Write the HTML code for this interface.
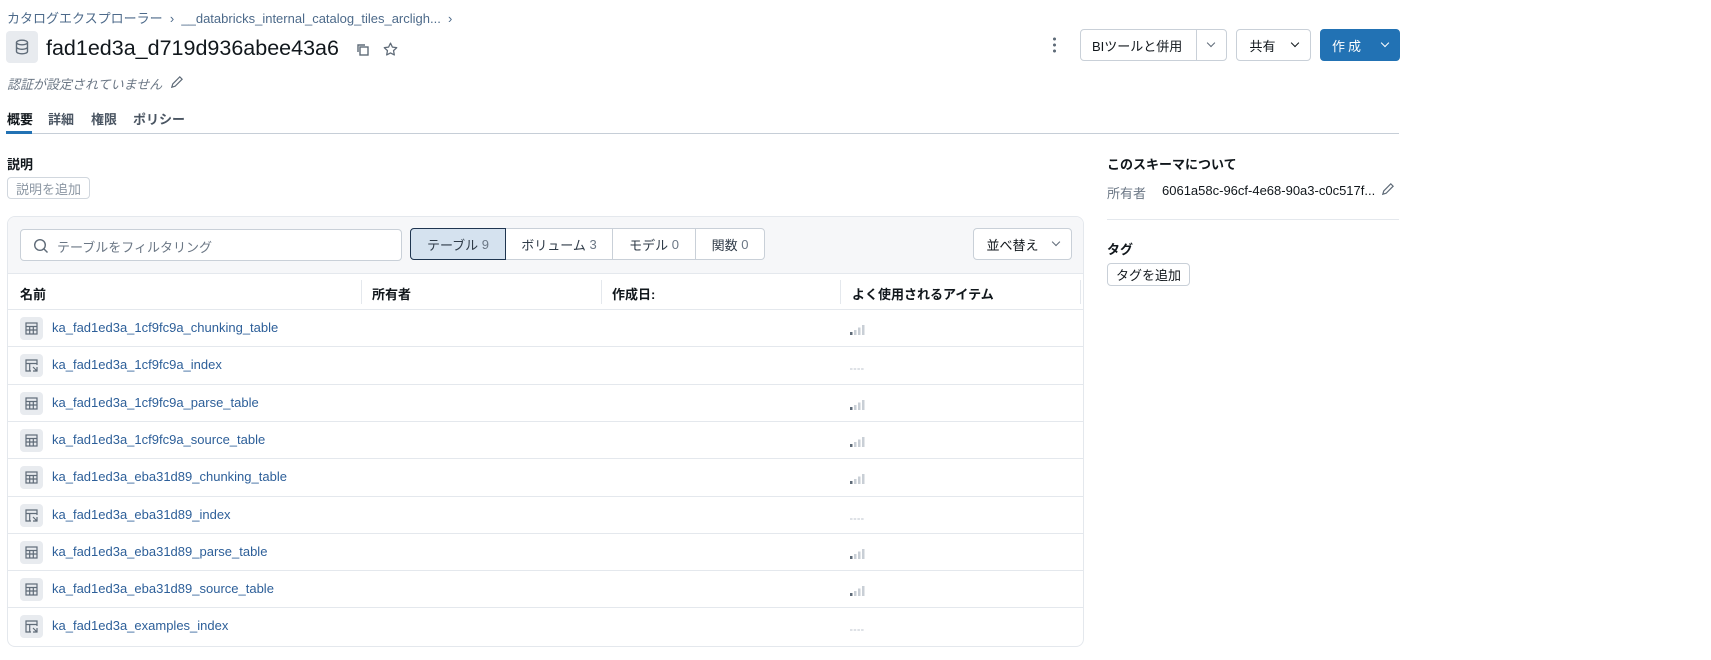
<!DOCTYPE html>
<html><head><meta charset="utf-8"><style>
*{box-sizing:border-box;margin:0;padding:0}
body{width:1711px;height:660px;background:#fff;font-family:"Liberation Sans","Noto Sans CJK JP",sans-serif;color:#11171c;position:relative;overflow:hidden;font-size:13px}
.a{position:absolute;white-space:nowrap}
.btn{position:absolute;border:1px solid #c9d0d8;border-radius:4px;background:#fff;display:flex;align-items:center;justify-content:center;font-size:13px;color:#11171c}
.chev{display:inline-block;width:6px;height:6px;border-right:1.5px solid currentColor;border-bottom:1.5px solid currentColor;transform:rotate(45deg);margin-top:-4px}
.hd{font-weight:bold;font-size:13px}
.row{position:absolute;left:8px;width:1075px;height:37px;border-top:1px solid #e4e8ed}
.ic{position:absolute;left:12px;top:7px;width:23px;height:23px;background:#e8ebef;border-radius:4px}
.nm{position:absolute;left:44px;top:10px;color:#2d5f99;font-size:13px}
.sig{position:absolute;left:842px;top:13px}
</style></head><body>
<div class="a" style="left:7px;top:8px;color:#4d6a8a;font-size:13px">カタログエクスプローラー&nbsp;&nbsp;›&nbsp;&nbsp;__databricks_internal_catalog_tiles_arcligh...&nbsp;&nbsp;›</div>
<div class="a" style="left:6px;top:31px;width:32px;height:32px;background:#e8ebef;border-radius:4px"><svg width="32" height="32" viewBox="0 0 32 32"><g fill="none" stroke="#5f6b78" stroke-width="1.4"><ellipse cx="16" cy="11.5" rx="5.5" ry="2.3"/><path d="M10.5 11.5v9c0 1.3 2.5 2.3 5.5 2.3s5.5-1 5.5-2.3v-9M10.5 16c0 1.3 2.5 2.3 5.5 2.3s5.5-1 5.5-2.3"/></g></svg></div>
<div class="a" style="left:46px;top:36px;font-size:21.5px;color:#11171c">fad1ed3a_d719d936abee43a6</div>
<svg class="a" style="left:355px;top:42px" width="16" height="16" viewBox="0 0 16 16"><g fill="none" stroke="#5f6b78" stroke-width="1.4"><rect x="5" y="5" width="8" height="8"/><path d="M3 10V3h7"/></g></svg>
<svg class="a" style="left:382px;top:41px" width="17" height="17" viewBox="0 0 24 24"><path d="M12 3l2.7 5.6 6.1.8-4.5 4.2 1.1 6.1L12 16.8l-5.4 2.9 1.1-6.1-4.5-4.2 6.1-.8z" fill="none" stroke="#5f6b78" stroke-width="1.8" stroke-linejoin="round"/></svg>
<div class="a" style="left:7px;top:74px;color:#6b7785;font-style:italic;font-size:13px">認証が設定されていません</div>
<svg class="a" style="left:169px;top:75px" width="15" height="15" viewBox="0 0 16 16"><path d="M3 13l1-3.5 7.5-7.5 2.5 2.5-7.5 7.5z" fill="none" stroke="#5f6b78" stroke-width="1.3"/></svg>
<div class="a" style="left:7px;top:109px;font-weight:bold;font-size:13px">概要</div>
<div class="a" style="left:48px;top:109px;font-weight:bold;font-size:13px;color:#4a5562">詳細</div>
<div class="a" style="left:91px;top:109px;font-weight:bold;font-size:13px;color:#4a5562">権限</div>
<div class="a" style="left:133px;top:109px;font-weight:bold;font-size:13px;color:#4a5562">ポリシー</div>
<div class="a" style="left:6px;top:133px;width:1393px;height:1px;background:#c6ced7"></div>
<div class="a" style="left:6px;top:131px;width:26px;height:3px;background:#2272b4"></div>

<div class="a" style="left:1053px;top:36px;width:3px;height:17px;background:radial-gradient(circle,#5f6b78 1.4px,transparent 1.6px) 0 0/3px 6px repeat-y"></div>
<div class="btn" style="left:1080px;top:29px;width:147px;height:32px;justify-content:flex-start;padding-left:11px">BIツールと併用<div style="position:absolute;left:115px;top:0;width:1px;height:30px;background:#c9d0d8"></div><span class="chev" style="position:absolute;left:127px;top:14px;color:#5f6b78"></span></div>
<div class="btn" style="left:1236px;top:29px;width:75px;height:32px;gap:16px">共有 <span class="chev" style="color:#11171c"></span></div>
<div class="btn" style="left:1320px;top:29px;width:80px;height:32px;background:#2272b4;border-color:#2272b4;color:#fff;gap:18px;letter-spacing:3px">作成<span class="chev"></span></div>

<div class="a hd" style="left:7px;top:154px">説明</div>
<div class="btn" style="left:7px;top:177px;width:83px;height:22px;color:#8c97a3;border-color:#d1d7de">説明を追加</div>

<div class="a" style="left:7px;top:216px;width:1077px;height:431px;border:1px solid #e4e8ed;border-radius:8px;overflow:hidden">
<div style="position:absolute;left:0;top:0;width:100%;height:57px;background:#f6f7f9;border-bottom:1px solid #e4e8ed"></div>
<div style="position:absolute;left:12px;top:12px;width:382px;height:32px;background:#fff;border:1px solid #c9d0d8;border-radius:4px"><svg style="position:absolute;left:12px;top:8px" width="16" height="16" viewBox="0 0 16 16"><circle cx="7" cy="7" r="5.3" fill="none" stroke="#5f6b78" stroke-width="1.4"/><path d="M11 11l3.5 3.5" stroke="#5f6b78" stroke-width="1.4"/></svg><span style="position:absolute;left:36px;top:7px;color:#6b7785">テーブルをフィルタリング</span></div>
<div style="position:absolute;left:402px;top:11px;width:355px;height:32px;border:1px solid #c9d0d8;border-radius:4px;background:#fff;display:flex">
<div style="width:96px;background:#d5e2ef;border:1px solid #1f3550;margin:-1px 0 -1px -1px;border-radius:4px 0 0 4px;display:flex;align-items:center;justify-content:center;color:#2f3b48">テーブル <span style="color:#6b7785">&nbsp;9</span></div>
<div style="width:107px;border-right:1px solid #c9d0d8;display:flex;align-items:center;justify-content:center;color:#2f3b48">ボリューム <span style="color:#6b7785">&nbsp;3</span></div>
<div style="width:83px;border-right:1px solid #c9d0d8;display:flex;align-items:center;justify-content:center;color:#2f3b48">モデル <span style="color:#6b7785">&nbsp;0</span></div>
<div style="flex:1;display:flex;align-items:center;justify-content:center;color:#2f3b48">関数 <span style="color:#6b7785">&nbsp;0</span></div>
</div>
<div class="btn" style="left:965px;top:11px;width:99px;height:32px;gap:14px">並べ替え <span class="chev" style="color:#5f6b78"></span></div>
<div class="a hd" style="left:12px;top:67px">名前</div>
<div class="a" style="left:353px;top:63px;width:1px;height:24px;background:#e4e8ed"></div>
<div class="a hd" style="left:364px;top:67px">所有者</div>
<div class="a" style="left:593px;top:63px;width:1px;height:24px;background:#e4e8ed"></div>
<div class="a hd" style="left:604px;top:67px">作成日:</div>
<div class="a" style="left:832px;top:63px;width:1px;height:24px;background:#e4e8ed"></div>
<div class="a hd" style="left:844px;top:67px">よく使用されるアイテム</div>
<div class="a" style="left:1072px;top:63px;width:1px;height:24px;background:#e4e8ed"></div>
</div>

<div id="rows"></div>

<div class="a hd" style="left:1107px;top:154px;font-size:13px">このスキーマについて</div>
<div class="a" style="left:1107px;top:183px;color:#6b7785">所有者</div>
<div class="a" style="left:1162px;top:183px">6061a58c-96cf-4e68-90a3-c0c517f...</div>
<svg class="a" style="left:1380px;top:182px" width="15" height="15" viewBox="0 0 16 16"><path d="M3 13l1-3.5 7.5-7.5 2.5 2.5-7.5 7.5z" fill="none" stroke="#5f6b78" stroke-width="1.3"/></svg>
<div class="a" style="left:1107px;top:219px;width:292px;height:1px;background:#e4e8ed"></div>
<div class="a hd" style="left:1107px;top:239px">タグ</div>
<div class="btn" style="left:1107px;top:263px;width:83px;height:23px">タグを追加</div>

<script>
var names=["ka_fad1ed3a_1cf9fc9a_chunking_table","ka_fad1ed3a_1cf9fc9a_index","ka_fad1ed3a_1cf9fc9a_parse_table","ka_fad1ed3a_1cf9fc9a_source_table","ka_fad1ed3a_eba31d89_chunking_table","ka_fad1ed3a_eba31d89_index","ka_fad1ed3a_eba31d89_parse_table","ka_fad1ed3a_eba31d89_source_table","ka_fad1ed3a_examples_index"];
var h="";
var tbl='<svg width="23" height="23" viewBox="0 0 23 23"><g fill="none" stroke="#5f6b78" stroke-width="1.2"><rect x="6" y="6" width="11" height="11"/><path d="M6 9.5h11M6 13h11M9.7 9.5V17M13.3 9.5V17"/></g></svg>';
var idx='<svg width="23" height="23" viewBox="0 0 23 23"><g fill="none" stroke="#5f6b78" stroke-width="1.2"><path d="M11 17H6V6h11v5M6 9.5h11M9.7 9.5V17"/><path d="M13 13l4 4M17 13v4h-4"/></g></svg>';
var sig='<svg width="16" height="10"><rect x="0" y="7" width="2.5" height="3" fill="#5f6b78"/><rect x="4" y="5" width="2.5" height="5" fill="#c9cfd6"/><rect x="8" y="2.5" width="2.5" height="7.5" fill="#c9cfd6"/><rect x="12" y="0" width="2.5" height="10" fill="#c9cfd6"/></svg>';
var dash='<svg width="16" height="10"><path d="M0 7h14" stroke="#c9cfd6" stroke-width="1.2" stroke-dasharray="2.5 1.2"/></svg>';
for(var i=0;i<9;i++){var ix=names[i].indexOf("index")>0;
h+='<div class="row" style="top:'+(309+i*37.3)+'px"><div class="ic">'+(ix?idx:tbl)+'</div><div class="nm">'+names[i]+'</div><div class="sig">'+(ix?dash:sig)+'</div></div>';}
document.getElementById("rows").innerHTML=h;
</script>
</body></html>
